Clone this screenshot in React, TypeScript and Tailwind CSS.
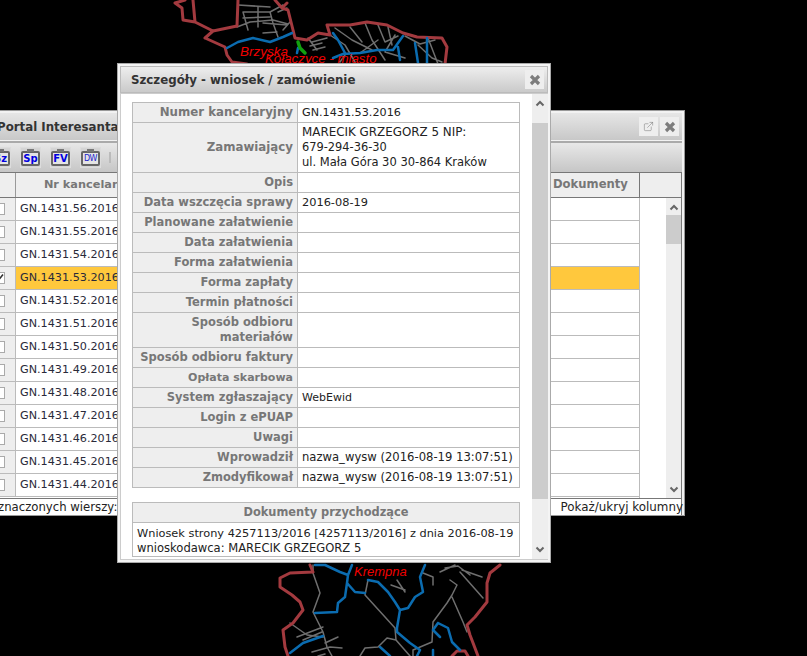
import React from 'react';
import { ExternalLink } from 'lucide-react';

const font = { fontFamily: '"DejaVu Sans", Verdana, sans-serif' };
const mapFont = { fontFamily: '"Liberation Sans", sans-serif' };

const rows = ['56', '55', '54', '53', '52', '51', '50', '49', '48', '47', '46', '45', '44'];

const details: { label: React.ReactNode; value?: React.ReactNode; h: string }[] = [
  {
    label: <span className="text-[11.8px]">Numer kancelaryjny</span>,
    value: <span className="text-[11.2px]">GN.1431.53.2016</span>,
    h: 'h-[20px]',
  },
  {
    label: <span className="text-[11.8px]">Zamawiający</span>,
    value: (
      <>
        <span className="text-[11.9px]">MARECIK GRZEGORZ 5 NIP:</span>
        <br />
        <span className="text-[11.4px]">679-294-36-30</span>
        <br />
        <span className="text-[11.5px]">ul. Mała Góra 30 30-864 Kraków</span>
      </>
    ),
    h: 'h-[50px]',
  },
  { label: 'Opis', h: 'h-[20px]' },
  { label: 'Data wszczęcia sprawy', value: <span className="text-[11.35px]">2016-08-19</span>, h: 'h-[20px]' },
  { label: 'Planowane załatwienie', h: 'h-[20px]' },
  { label: 'Data załatwienia', h: 'h-[20px]' },
  { label: 'Forma załatwienia', h: 'h-[20px]' },
  { label: 'Forma zapłaty', h: 'h-[20px]' },
  { label: 'Termin płatności', h: 'h-[20px]' },
  {
    label: (
      <>
        Sposób odbioru
        <br />
        materiałów
      </>
    ),
    h: 'h-[35px]',
  },
  { label: 'Sposób odbioru faktury', h: 'h-[20px]' },
  { label: <span className="text-[11px]">Opłata skarbowa</span>, h: 'h-[20px]' },
  { label: 'System zgłaszający', value: 'WebEwid', h: 'h-[20px]' },
  { label: 'Login z ePUAP', h: 'h-[20px]' },
  { label: 'Uwagi', h: 'h-[20px]' },
  { label: 'Wprowadził', value: <span className="text-[11.6px]">nazwa_wysw (2016-08-19 13:07:51)</span>, h: 'h-[20px]' },
  { label: 'Zmodyfikował', value: <span className="text-[11.6px]">nazwa_wysw (2016-08-19 13:07:51)</span>, h: 'h-[20px]' },
];

const Chevron = ({ down }: { down?: boolean }) => (
  <svg width="10" height="7" viewBox="0 0 10 7" className="block">
    <path
      d={down ? 'M1.5 1.5 5 5 8.5 1.5' : 'M1.5 5.5 5 2 8.5 5.5'}
      fill="none"
      stroke="#666"
      strokeWidth="2"
    />
  </svg>
);

const CloseIcon = () => (
  <svg width="12" height="12" viewBox="0 0 12 12" className="block">
    <path d="M2 2 10 10M10 2 2 10" stroke="#7d7d7d" strokeWidth="3.2" />
  </svg>
);

const ToolButton = ({ label, thin }: { label: string; thin?: boolean }) => (
  <div className="w-[21px] h-[21px] shrink-0 bg-[#d4d4d4] border border-[#dcdcdc] flex items-end justify-center">
    <div className="relative w-[19px] h-[15px] mb-px border-2 border-[#666] rounded-[2px] bg-[#e4e4e4] flex items-center justify-center">
      <div className="absolute -top-[4px] left-[4px] w-[7px] h-[3px] bg-[#777]" />
      <span
        className={
          thin
            ? 'text-[8px] leading-none text-[#2222cc] tracking-[-0.5px]'
            : 'text-[10px] font-bold leading-none text-[#0000e0]'
        }
      >
        {label}
      </span>
    </div>
  </div>
);

const MapLines = () => (
  <svg width="807" height="656" viewBox="0 0 807 656" className="absolute left-0 top-0">
    <g fill="none" strokeLinejoin="round" strokeLinecap="round">
      <g stroke="#6f6f6f" strokeWidth="1.5">
        <path d="M207 37 213 30 M238 5 270 7 M283 5 270 12 243 12 248 30 M258 7 258 27 M270 12 273 23 278 37 M263 23 287 25 M237 27 250 22 273 20 288 24 M263 33 277 32 M243 18 270 17 M278 12 287 8 M283 30 290 22" />
        <path d="M308 38 317 50 M312 42 327 38 M313 50 325 47 M310 46 322 43 M330 35 345 45 355 62 M335 28 352 40 372 50 M350 27 362 42 M365 23 372 40 385 60 M378 25 385 42 398 36 M388 27 392 45 M395 35 385 52 405 58 M360 53 378 40 M405 36 420 44 435 40 M418 45 432 58 442 62 M428 38 438 64 M345 55 340 62" />
        <path d="M313 565 313 573 320 593 313 612 323 632 327 647 332 656 M290 623 307 635 323 637 M297 637 323 627 M303 640 322 632 M312 652 330 647 342 648 M325 643 338 637 M318 656 325 654" />
        <path d="M368 580 365 595 395 628 396 640 387 638 378 647 365 648 360 656 M396 640 410 656" />
        <path d="M413 656 413 650 432 642 433 622 447 603 452 595 457 585 450 580 M452 597 463 622 467 632 M462 570 482 577 M460 572 483 598 M440 572 455 565 M423 573 433 577 433 585 M397 580 405 592 M391 585 405 590 M445 568 458 566 470 575" />
      </g>
      <g stroke="#a33a3f" strokeWidth="3">
        <path d="M185 0 175 3 182 8 183 20 195 22 207 28 213 31 237 26 238 0 M193 0 195 22 M205 38 213 31 M205 38 225 47 227 55 232 62 247 64" />
        <path d="M275 0 282 8 288 10 290 18 293 30 295 38 307 40 318 33 330 35 327 25 350 25 367 22 387 25 403 33 417 37 442 38 447 47 445 64 M282 8 287 3" />
        <path d="M310 565 313 572 290 573 280 578 280 587 292 595 300 602 303 610 293 623 283 630 285 647 288 656" />
        <path d="M500 565 490 573 487 583 487 602 475 617 467 625 470 635 478 656 M452 656 457 651 465 651 468 656" />
      </g>
      <g stroke="#0b6cb0" strokeWidth="2.5">
        <path d="M227 48 238 42 253 38 270 42 283 37 292 33 M298 48 297 53" />
        <path d="M333 33 338 40 345 53 M333 58 343 54 360 53 377 50 393 50 398 43 403 36 M398 47 400 60 M415 43 418 63 M427 38 427 63" />
        <path d="M315 565 325 565 340 572 348 575 352 565 M348 575 347 583 345 597 338 603 337 612 315 613 M347 583 355 592 365 593 M290 653 303 643 323 636" />
        <path d="M368 580 378 582 388 592 395 602 400 610 397 628 397 632 410 643 420 650 417 656 M400 610 408 608 415 597 423 592 420 577 425 565 M380 647 390 656" />
        <path d="M433 656 433 650 M438 623 433 630 440 637 M438 623 448 628 452 642 460 650" />
      </g>
      <path d="M298 42 300 48 305 53" stroke="#12a010" strokeWidth="3.5" />
    </g>
  </svg>
);

export default function App() {
  return (
    <div className="relative w-[807px] h-[656px] overflow-hidden bg-black text-[11px] text-[#1a1a2a]" style={font}>
      <MapLines />
      <div className="absolute left-[240px] top-[45px] text-[13.5px] italic text-[#f00000] leading-none" style={mapFont}>
        Brzyska
      </div>
      <div className="absolute left-[265px] top-[52px] text-[13.3px] italic text-[#f00000] leading-none" style={mapFont}>
        Kołaczyce - miasto
      </div>
      <div className="absolute left-[354px] top-[565px] text-[13px] italic text-[#f00000] leading-none" style={mapFont}>
        Krempna
      </div>

      {/* okno pod spodem */}
      <div className="absolute left-[-4px] top-[110px] w-[689px] h-[406px] bg-[#f2f2f2] border border-[#999] pt-[2px] px-[2px] flex flex-col">
        <div className="h-[27px] shrink-0 pt-[2px] bg-gradient-to-b from-[#e6e6e6] to-[#c8c8c8] flex items-center justify-between pr-[3px]">
          <span className="font-bold text-[11.8px] text-[#333] ml-[-2px]">Portal Interesanta</span>
          <div className="flex gap-[2px] mt-[-2px]">
            <div className="w-[19px] h-[19px] bg-[#eeeeee] flex items-center justify-center">
              <ExternalLink size={11} strokeWidth={1} color="#666" />
            </div>
            <div className="w-[19px] h-[19px] bg-[#eeeeee] flex items-center justify-center">
              <CloseIcon />
            </div>
          </div>
        </div>
        <div className="h-[31px] shrink-0 mt-px border-t-2 border-[#aaa] bg-gradient-to-b from-[#e8e8e8] to-[#c6c6c6] flex items-center">
          <div className="ml-[-9px] flex items-center gap-[9px]">
            <ToolButton label="Sz" />
            <ToolButton label="Sp" />
            <ToolButton label="FV" />
            <ToolButton label="DW" thin />
            <div className="w-[2px] h-[11px] ml-[-1px] bg-[#bbb]" />
          </div>
        </div>
        <div className="flex h-[26px] shrink-0 bg-[#eeeeee] border border-l-0 border-[#777] font-bold text-[#777]">
          <div className="w-[17px] shrink-0 border-r border-[#999]" />
          <div className="w-[156px] shrink-0 text-center text-[11.3px] leading-[23px]">Nr kancelaryjny</div>
          <div className="w-[381px] shrink-0" />
          <div className="w-[87px] shrink-0 text-[11.6px] leading-[23px] border-r border-[#777]">Dokumenty</div>
          <div className="flex-1" />
        </div>
        <div className="flex flex-1 min-h-0 bg-white border-r border-[#777]">
          <div className="w-[641px] shrink-0 border-r border-[#bbb]">
            {rows.map((n) => {
              const on = n === '53';
              return (
                <div key={n} className={`flex h-[23px] border-b border-[#bbb] ${on ? 'bg-[#ffc83d]' : 'bg-white'}`}>
                  <div className="w-[17px] shrink-0 bg-[#eeeeee] border-r border-[#bbb] flex items-center">
                    <div className="w-[12px] h-[12px] shrink-0 bg-white border border-[#aaa] flex items-center justify-center ml-[-6px]">
                      {on && (
                        <svg width="10" height="10" viewBox="0 0 10 10">
                          <path d="M1 6 3.5 8.5 9 1.5" fill="none" stroke="#333" strokeWidth="1.6" />
                        </svg>
                      )}
                    </div>
                  </div>
                  <div className="pl-[4px] leading-[21px] text-[11.2px] text-[#2a2a3a] whitespace-nowrap">GN.1431.{n}.2016</div>
                </div>
              );
            })}
          </div>
          <div className="flex-1 flex justify-end">
            <div className="w-[15px] bg-[#eeeeee] flex flex-col items-center justify-between pt-[6px] pb-[5px] relative">
              <Chevron />
              <div className="absolute top-[17px] left-0 w-full h-[29px] bg-[#cccccc]" />
              <Chevron down />
            </div>
          </div>
        </div>
        <div className="h-[17px] shrink-0 pt-px bg-white border border-l-0 border-b-0 border-[#777] flex justify-between items-center text-[#222] whitespace-nowrap">
          <span className="text-[11.7px] ml-[-1px]">znaczonych wierszy:</span>
          <span className="text-[11.9px] mr-[-2px]">Pokaż/ukryj kolumny</span>
        </div>
      </div>

      {/* okno szczegółów */}
      <div className="absolute left-[117px] top-[63px] w-[434px] h-[500px] bg-[#f4f4f4] border border-[#aaa] p-[2px] flex flex-col">
        <div className="h-[27px] shrink-0 pt-[2px] border border-[#bbb] bg-gradient-to-b from-[#eeeeee] to-[#cacaca] flex items-center justify-between pl-[10px] pr-[3px]">
          <span className="font-bold text-[11.8px] text-[#333]">Szczegóły - wniosek / zamówienie</span>
          <div className="w-[19px] h-[19px] mt-[-2px] bg-[#eeeeee] flex items-center justify-center">
            <CloseIcon />
          </div>
        </div>
        <div className="flex-1 min-h-0 bg-white flex border border-r-0 border-[#ccc] pt-[8px] pl-[11px]">
          <div className="w-[388px] shrink-0">
            <div className="border border-[#bbb] border-b-0">
              {details.map((d, i) => (
                <div key={i} className={`flex ${d.h} border-b border-[#bbb]`}>
                  <div className="w-[165px] shrink-0 bg-[#eeeeee] border-r border-[#bbb] flex items-center justify-end text-right pr-[4px] font-bold text-[11.5px] text-[#777] leading-[15px]">
                    <span>{d.label}</span>
                  </div>
                  <div className="pl-[4px] flex items-center leading-[15px] text-[#222] whitespace-nowrap">
                    <span>{d.value}</span>
                  </div>
                </div>
              ))}
            </div>
            <div className="mt-[14px] border border-[#bbb]">
              <div className="h-[20px] bg-[#eeeeee] border-b border-[#bbb] text-center font-bold text-[11.4px] text-[#777] leading-[19px]">
                Dokumenty przychodzące
              </div>
              <div className="h-[33px] pl-[4px] pt-[3px] leading-[15px] text-[#222] whitespace-nowrap">
                <span className="text-[11.33px]">Wniosek strony 4257113/2016 [4257113/2016] z dnia 2016-08-19</span>
                <br />
                <span className="text-[11.56px]">wnioskodawca: MARECIK GRZEGORZ 5</span>
              </div>
            </div>
          </div>
          <div className="ml-auto -mt-[8px] w-[16px] bg-[#eeeeee] flex flex-col items-center justify-between pt-[6px] pb-[6px] relative">
            <Chevron />
            <div className="absolute top-[29px] left-0 w-full h-[376px] bg-[#cccccc]" />
            <Chevron down />
          </div>
        </div>
      </div>
    </div>
  );
}
